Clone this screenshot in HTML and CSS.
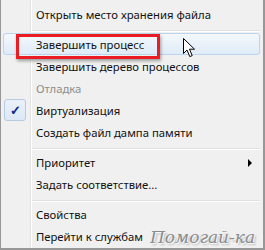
FILE: index.html
```html
<!DOCTYPE html>
<html lang="ru">
<head>
    <meta charset="UTF-8">
    <title>Контекстное меню</title>
    <link rel="stylesheet" href="styles.css">
</head>
<body>
    <div class="menu">
        <div class="menu-item">Открыть место хранения файла</div>
        <div class="separator"></div>
        <div class="menu-item hover">
            Завершить процесс
            <div class="red-frame"></div>
            <svg class="cursor" width="13" height="20" viewBox="0 0 13 20">
                <path d="M0.5 0.5 L0.5 15.5 L4 12 L6.8 18.6 L9.2 17.6 L6.5 11.2 L11.5 11.2 Z" fill="#fff" stroke="#000" stroke-width="1" stroke-linejoin="round"/>
            </svg>
        </div>
        <div class="menu-item">Завершить дерево процессов</div>
        <div class="menu-item disabled">Отладка</div>
        <div class="menu-item checked">
            <span class="check-box">✓</span>
            Виртуализация
        </div>
        <div class="menu-item">Создать файл дампа памяти</div>
        <div class="separator"></div>
        <div class="menu-item submenu">Приоритет</div>
        <div class="menu-item">Задать соответствие...</div>
        <div class="separator"></div>
        <div class="menu-item">Свойства</div>
        <div class="menu-item">Перейти к службам</div>
        <div class="watermark">Помогай-ка</div>
    </div>
</body>
</html>
```

FILE: styles.css
```css
* { margin: 0; padding: 0; box-sizing: border-box; }
body { background: #fff; font-family: 'Noto Sans', 'Segoe UI', sans-serif; font-size: 11.3px; color: #111; }
.menu { position: relative; width: 265px; height: 250px; padding: 3px 3px 0 2px; overflow: hidden;
    border: 1px solid #979797; border-top: none; border-right-width: 2px; border-bottom-width: 2px;
    background: linear-gradient(to right, transparent 29px, #e2e3e3 29px, #e2e3e3 30px, #fff 30px, #fff 31px, transparent 31px), #f0f0f0; }
.menu-item { position: relative; height: 22px; line-height: 21px; padding-left: 32px; white-space: nowrap; border: 1px solid transparent; border-radius: 3px; }
.menu-item.hover { border-color: #b9d4ec; background: linear-gradient(#f3f8fc, #dfebf7); }
.menu-item.disabled { color: #8d8d8d; }
.separator { height: 8px; margin-left: 29px; padding-top: 5px; }
.separator::after { content: ''; display: block; border-top: 1px solid #e0e0e0; border-bottom: 1px solid #fff; }
.check-box { position: absolute; left: 0; top: -1px; width: 22px; height: 22px; border: 1px solid #b5cbe4; border-radius: 3px;
    background: linear-gradient(#eaf1fa, #dce8f6); color: #0c2a8c; font-size: 13px; font-weight: 700; line-height: 20px; text-align: center; }
.submenu::after { content: ''; position: absolute; right: 7px; top: 7px; border-left: 4px solid #000; border-top: 4px solid transparent; border-bottom: 4px solid transparent; }
.red-frame { position: absolute; left: 12px; top: 0; width: 144px; height: 25px; border: 3px solid #ec1c24; box-shadow: 1px 2px 3px rgba(0, 0, 0, 0.35); }
.cursor { position: absolute; left: 179px; top: 4px; }
.watermark { position: absolute; left: 146px; top: 227px; font-family: 'DejaVu Serif', serif; font-style: italic; font-size: 17px; white-space: nowrap;
    color: #8c8c8c; text-shadow: 1px 1px 1px #fff, 2px 2px 2px rgba(0, 0, 0, 0.25); background: #f0f0f0; padding: 0 3px; line-height: 20px; }
```
